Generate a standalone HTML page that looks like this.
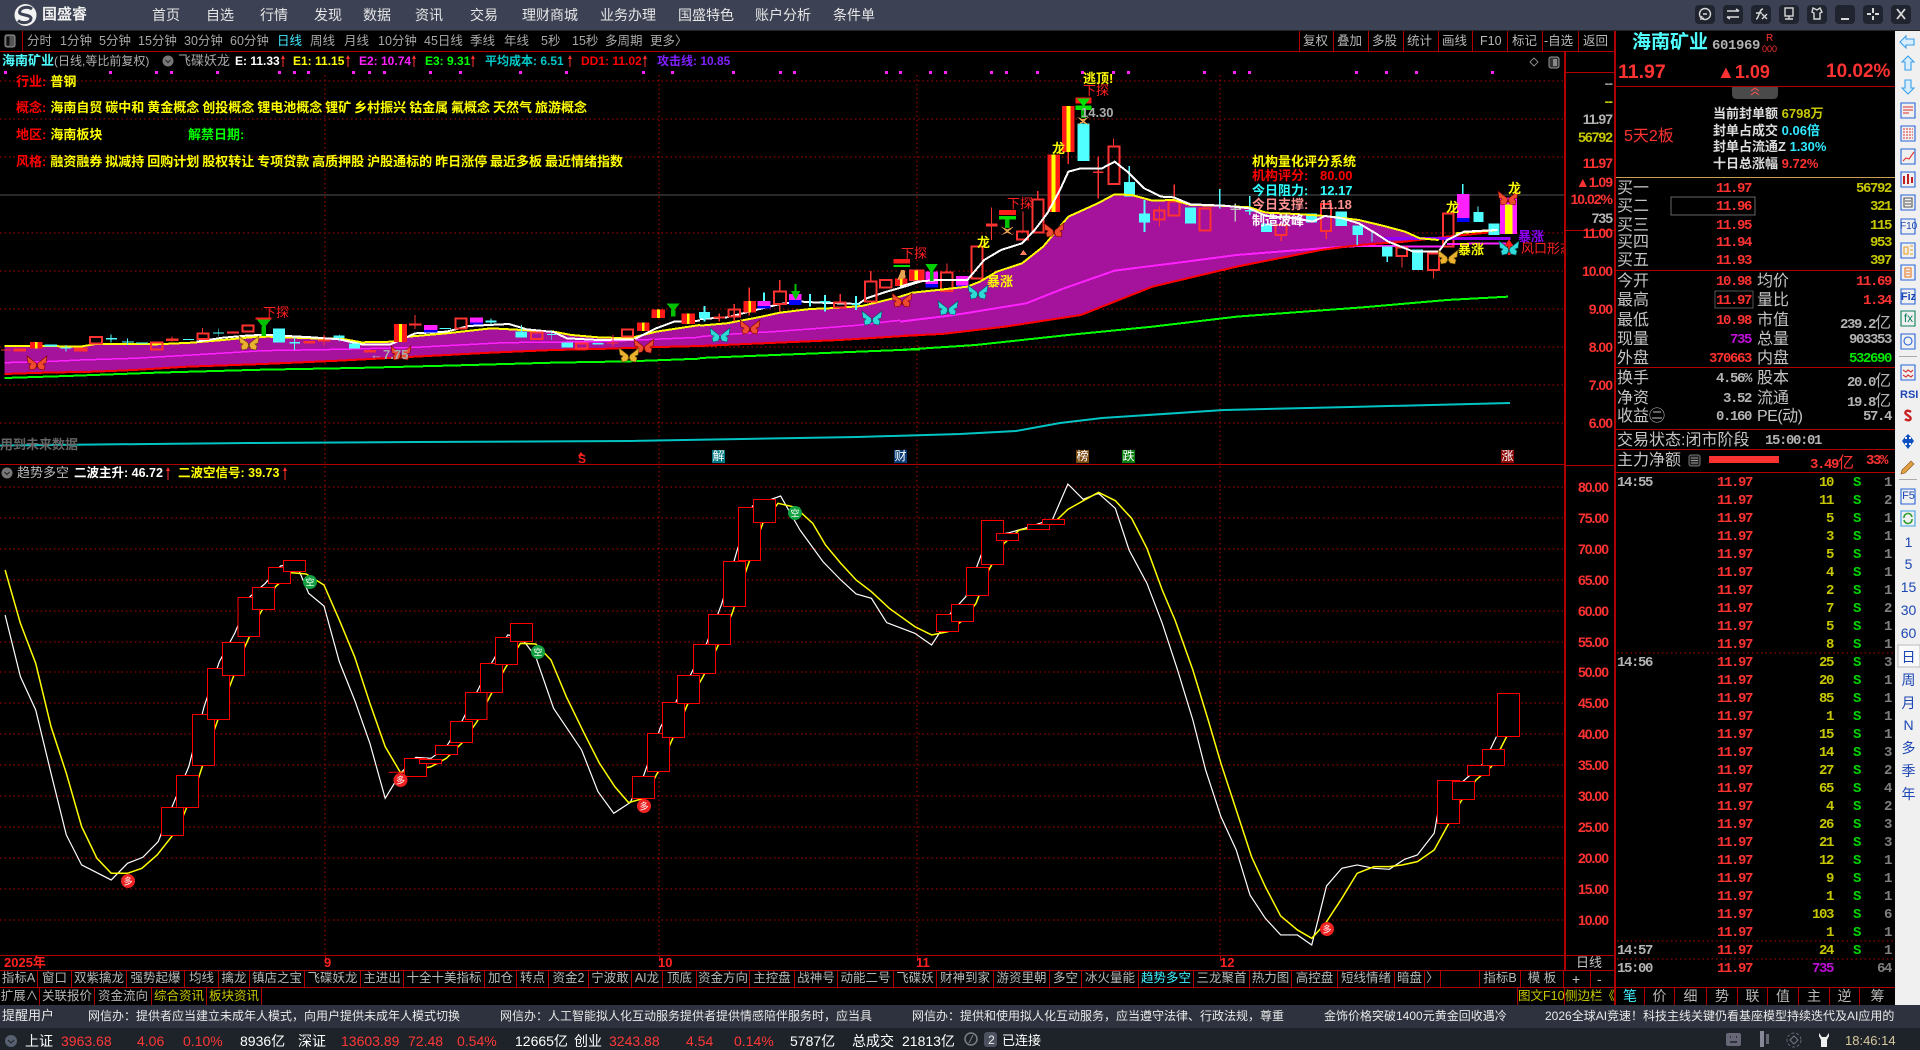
<!DOCTYPE html>
<html lang="zh"><head><meta charset="utf-8"><title>国盛睿</title>
<style>
html,body{margin:0;padding:0;background:#000;width:1920px;height:1050px;overflow:hidden}
body{position:relative;font-family:"Liberation Sans","WenQuanYi Zen Hei","Noto Sans CJK SC",sans-serif;font-size:12px;color:#bbb}
.a,.a2{position:absolute;white-space:nowrap;line-height:16px}
svg.n *{vector-effect:non-scaling-stroke}
.bar{position:absolute}
.m{position:absolute;top:6px;font-size:14px;color:#e6e6e6;line-height:18px;white-space:nowrap}
.p{position:absolute;top:33px;line-height:16px;color:#a8a8a8;font-size:12.5px;white-space:nowrap}
.tb{position:absolute;top:33px;line-height:16px;color:#b8b8b8;font-size:12.5px;white-space:nowrap}
.c{position:absolute;text-align:center;white-space:nowrap;overflow:hidden;font-size:12.5px;line-height:17px;height:17px;color:#b8b8b8;border-right:1px solid #b00000;box-sizing:border-box}
.b13{font-size:13px;font-weight:bold}
.g{margin-left:4px;word-spacing:-.65px}
.ax{position:absolute;width:50px;text-align:right;font-family:"Liberation Sans",sans-serif;font-weight:bold;font-size:14px;letter-spacing:-1px;line-height:16px;color:#ff3232}
.ix{left:1558px}.mx{left:1562px}
.l{position:absolute;left:1617px;font-size:16px;line-height:18px;color:#c4c4c4;white-space:nowrap}
.l2{left:1757px}
.v{position:absolute;font-family:"Liberation Mono",monospace;font-weight:bold;font-size:14px;letter-spacing:-1.4px;line-height:16px;text-align:right;white-space:nowrap;color:#ff3232}
.pr{left:1680px;width:71px}
.am{left:1800px;width:91px}
.t{position:absolute;left:0;height:16px;width:1895px;margin-top:1px;font-family:"Liberation Mono",monospace;font-weight:bold;font-size:14px;letter-spacing:-1.4px;line-height:16px}
.t span{position:absolute;display:block}
.t .k{left:1617px;color:#b4b4b4}
.t .q{left:1717px;color:#ff3232}
.t .o{left:1790px;width:43px;text-align:right;color:#c8c800}
.t .s{left:1853px;color:#00d800}
.t .u{left:1860px;width:31px;text-align:right;color:#808080}
.st{position:absolute;top:1033px;font-size:14px;line-height:16px;color:#fff;white-space:nowrap}
.rd{color:#ff3838}
.ic{position:absolute;left:1900px;width:17px;text-align:center;color:#1c46b4;font-size:14px;line-height:18px;font-family:"Liberation Sans",sans-serif}
</style></head><body>

<!-- title bar -->
<div class="bar" style="left:0;top:0;width:1920px;height:30px;background:#3c4254"></div>
<div class="bar" style="left:0;top:30px;width:1920px;height:1px;background:#222"></div>
<svg style="position:absolute;left:12px;top:2px" width="28" height="26" viewBox="0 0 28 26">
<circle cx="13.500" cy="13" r="11" fill="#f2f2f2"/><path d="M20 7C16 4 8 5 7.500 10 7.500 14 19 12 19 16.500 18.500 21 10 22 6 18.500" fill="none" stroke="#3c4254" stroke-width="3"/></svg>
<div class="a" style="left:42px;top:6px;font-size:15px;line-height:18px;color:#f0f0f0;font-weight:bold">国盛睿</div>
<div class="m" style="left:152px">首页</div><div class="m" style="left:206px">自选</div><div class="m" style="left:260px">行情</div><div class="m" style="left:314px">发现</div><div class="m" style="left:363px">数据</div><div class="m" style="left:415px">资讯</div><div class="m" style="left:470px">交易</div><div class="m" style="left:522px">理财商城</div><div class="m" style="left:600px">业务办理</div><div class="m" style="left:678px">国盛特色</div><div class="m" style="left:755px">账户分析</div><div class="m" style="left:833px">条件单</div>

<svg style="position:absolute;left:1690px;top:0" width="230" height="30" viewBox="1690 0 230 30">
<g fill="#20242f"><rect x="1695" y="5" width="20" height="19" rx="4"/><rect x="1723" y="5" width="20" height="19" rx="4"/><rect x="1751" y="5" width="20" height="19" rx="4"/><rect x="1779" y="5" width="20" height="19" rx="4"/><rect x="1807" y="5" width="20" height="19" rx="4"/><rect x="1835" y="5" width="20" height="19" rx="4"/><rect x="1863" y="5" width="20" height="19" rx="4"/><rect x="1891" y="5" width="20" height="19" rx="4"/></g>
<g fill="none" stroke="#d8d8d8" stroke-width="1.400">
<circle cx="1705" cy="14" r="5.500"/><path d="M1702 16l-1 3 3-1M1703 14h4"/>
<path d="M1727 11h12M1736 9l3 2M1739 17h-12M1730 19l-3-2"/>
<path d="M1756 19c3 0 3-10 7-10M1756 13h6M1762 14l5 5M1767 14l-5 5"/>
<rect x="1785" y="8" width="8" height="8"/><path d="M1785 19h8M1789 16v3"/>
<path d="M1813 8l4 2 3-2 2 4-2 1v6h-6v-6l-2-1z"/>
<path d="M1841 19h8" stroke-width="2"/>
<path d="M1873 8v5M1873 16v4M1867 14h4M1875 14h4" stroke-width="2"/>
<path d="M1897 9l8 10M1905 9l-8 10" stroke-width="1.800"/></g></svg>

<!-- period row -->
<div class="bar" style="left:22px;top:31px;width:1px;height:20px;background:#b00000"></div>
<svg style="position:absolute;left:3px;top:33px" width="14" height="16"><rect x="2" y="2" width="10" height="12" rx="2" fill="#555" stroke="#999"/><rect x="3.500" y="3.500" width="3" height="9" fill="#111"/></svg>
<div class="p" style="left:27px">分时</div><div class="p" style="left:60px">1分钟</div><div class="p" style="left:99px">5分钟</div><div class="p" style="left:138px">15分钟</div><div class="p" style="left:184px">30分钟</div><div class="p" style="left:230px">60分钟</div><div class="p" style="left:277px;color:#40e8ff">日线</div><div class="p" style="left:310px">周线</div><div class="p" style="left:344px">月线</div><div class="p" style="left:378px">10分钟</div><div class="p" style="left:424px">45日线</div><div class="p" style="left:470px">季线</div><div class="p" style="left:504px">年线</div><div class="p" style="left:541px">5秒</div><div class="p" style="left:572px">15秒</div><div class="p" style="left:605px">多周期</div><div class="p" style="left:650px">更多〉</div>
<div class="tb" style="left:1303px">复权</div><div class="tb" style="left:1337px">叠加</div><div class="tb" style="left:1372px">多股</div><div class="tb" style="left:1407px">统计</div><div class="tb" style="left:1442px">画线</div><div class="tb" style="left:1480px">F10</div><div class="tb" style="left:1512px">标记</div><div class="tb" style="left:1544px">-自选</div><div class="tb" style="left:1583px">返回</div>

<!-- base chart -->
<svg class="n" style="position:absolute;left:0;top:0" width="1920" height="1050" viewBox="0 0 1920 1050">
<g stroke="#b80000" stroke-width="1" fill="none" stroke-dasharray="1.500 3" shape-rendering="crispEdges">
<path d="M0 81H1564M0 119H1564M0 157H1564M0 233H1564M0 271H1564M0 309H1564M0 347H1564M0 385H1564M0 423H1564"/>
<path d="M0 487H1564M0 518H1564M0 549H1564M0 580H1564M0 611H1564M0 642H1564M0 672H1564M0 703H1564M0 734H1564M0 765H1564M0 796H1564M0 827H1564M0 858H1564M0 889H1564M0 920H1564"/>
<path d="M325 75V955M659 75V955M917 75V955M1220 75V955"/>
<path d="M1617 653H1893M1617 941H1893M1617 959H1893"/>
</g>
<path d="M0 195H1564" stroke="#555" shape-rendering="crispEdges"/>
<g fill="#ff20ff" shape-rendering="crispEdges"><rect x="4" y="71" width="3" height="3"/><rect x="109" y="71" width="3" height="3"/><rect x="155" y="71" width="3" height="3"/><rect x="170" y="71" width="3" height="3"/><rect x="216" y="71" width="3" height="3"/><rect x="278" y="71" width="3" height="3"/><rect x="293" y="71" width="3" height="3"/><rect x="307" y="71" width="3" height="3"/><rect x="352" y="71" width="3" height="3"/><rect x="368" y="71" width="3" height="3"/><rect x="383" y="71" width="3" height="3"/><rect x="429" y="71" width="3" height="3"/><rect x="459" y="71" width="3" height="3"/><rect x="519" y="71" width="3" height="3"/><rect x="565" y="71" width="3" height="3"/><rect x="642" y="71" width="3" height="3"/><rect x="671" y="71" width="3" height="3"/><rect x="732" y="71" width="3" height="3"/><rect x="779" y="71" width="3" height="3"/><rect x="793" y="71" width="3" height="3"/><rect x="885" y="71" width="3" height="3"/><rect x="899" y="71" width="3" height="3"/><rect x="929" y="71" width="3" height="3"/><rect x="944" y="71" width="3" height="3"/><rect x="990" y="71" width="3" height="3"/><rect x="1005" y="71" width="3" height="3"/><rect x="1036" y="71" width="3" height="3"/><rect x="1081" y="71" width="3" height="3"/><rect x="1112" y="71" width="3" height="3"/><rect x="1127" y="71" width="3" height="3"/><rect x="1203" y="71" width="3" height="3"/><rect x="1233" y="71" width="3" height="3"/><rect x="1248" y="71" width="3" height="3"/><rect x="1355" y="71" width="3" height="3"/><rect x="1385" y="71" width="3" height="3"/><rect x="1415" y="71" width="3" height="3"/><rect x="1491" y="71" width="3" height="3"/></g>

<!-- cyan long MA -->
<polyline points="0,445.500 96,444.500 248,443 415,442 630,441 857,437 960,434 1016,431 1060,423 1102,418 1224,410 1350,407 1510,403" fill="none" stroke="#00c4c4" stroke-width="2"/>

<!-- region left: zoom 7 coordinates -->
<g transform="translate(0,300) scale(.4464,.3333)" shape-rendering="crispEdges">
<polygon fill="#a5129b" points="10,138 100,138 180,140 215,132 300,132 350,133 430,128 500,120 560,112 600,110 700,115 760,115 810,127 880,125 915,110 1000,100 1100,85 1170,90 1240,95 1280,105 1340,112 1410,115 1470,95 1568,75 1568,138 1450,142 1340,147 1240,150 1100,158 930,170 760,182 590,192 420,200 300,210 215,215 100,218 10,222"/>
<g fill="none" stroke-width="1.500">
<polyline stroke="#ff20ff" points="10,188 100,185 180,180 300,175 430,165 590,152 760,148 930,142 1130,128 1340,125 1568,112"/>
<polyline stroke="#ff0000" stroke-width="2" points="10,222 100,218 215,215 300,210 420,200 590,192 760,182 930,170 1100,158 1240,150 1340,147 1450,142 1568,138"/>
<polyline stroke="#00ff00" stroke-width="2" points="10,234 150,228 350,218 590,209 795,204 1000,197 1240,188 1410,184 1568,176"/>
<polyline stroke="#ffff00" stroke-width="2" points="10,138 100,138 180,140 215,132 300,132 350,133 430,128 500,120 560,112 600,110 700,115 760,115 810,127 880,125 915,110 1000,100 1100,85 1170,90 1240,95 1280,105 1340,112 1410,115 1470,95 1568,75"/>
<polyline stroke="#ffffff" stroke-width="2" points="440,125 500,113 560,106 600,105 700,112 760,118 810,133 875,133 930,100 1000,95 1050,78 1140,72 1180,88 1240,96 1270,115 1340,120 1420,118 1470,85 1510,65 1568,62"/>
</g>
<!-- candles -->
<g fill="#ff3232"><rect x="30" y="145" width="28" height="10"/><rect x="372" y="115" width="28" height="8"/><rect x="508" y="94" width="27" height="7"/><rect x="2" y="148" width="23" height="4"/><rect x="680" y="123" width="26" height="8"/><rect x="712" y="119" width="28" height="5"/><rect x="815" y="150" width="27" height="8"/><rect x="916" y="70" width="28" height="6"/><rect x="1360" y="127" width="25" height="4"/><rect x="929" y="45" width="2" height="42"/><rect x="453" y="84" width="2" height="18"/><rect x="725" y="104" width="2" height="32"/><rect x="384" y="110" width="2" height="14"/><rect x="1372" y="105" width="2" height="35"/></g>
<g fill="#ff1a1a"><rect x="67" y="126" width="28" height="19"/><rect x="883" y="72" width="29" height="54"/><rect x="1460" y="28" width="30" height="26"/><rect x="1427" y="67" width="28" height="26"/><rect x="1527" y="40" width="30" height="32"/></g>
<g fill="#ffff00"><rect x="78" y="126" width="6" height="19"/><rect x="894" y="72" width="6" height="54"/><rect x="1472" y="28" width="6" height="26"/><rect x="1438" y="67" width="6" height="26"/><rect x="1539" y="40" width="6" height="32"/></g>
<g fill="none" stroke="#ff3232" stroke-width="2"><rect x="202" y="111" width="26" height="19"/><rect x="338" y="127" width="26" height="21"/><rect x="543" y="76" width="25" height="19"/><rect x="1020" y="55" width="25" height="30"/><rect x="1190" y="98" width="25" height="19"/><rect x="1393" y="88" width="25" height="22"/><rect x="1290" y="130" width="26" height="15"/><rect x="442" y="100" width="25" height="17"/><rect x="168" y="145" width="26" height="7"/></g>
<g fill="#50ffff"><rect x="612" y="85" width="26" height="42"/><rect x="782" y="130" width="24" height="15"/><rect x="1155" y="95" width="25" height="18"/><rect x="1258" y="127" width="26" height="16"/><rect x="100" y="133" width="28" height="6"/><rect x="237" y="114" width="25" height="4"/><rect x="273" y="124" width="27" height="4"/><rect x="305" y="127" width="27" height="4"/><rect x="135" y="142" width="25" height="4"/><rect x="477" y="97" width="25" height="4"/><rect x="410" y="117" width="25" height="3"/><rect x="648" y="126" width="24" height="4"/><rect x="747" y="106" width="25" height="8"/><rect x="985" y="84" width="25" height="3"/><rect x="1088" y="62" width="24" height="5"/><rect x="1225" y="102" width="20" height="3"/><rect x="1327" y="129" width="25" height="5"/><rect x="248" y="103" width="2" height="25"/><rect x="285" y="115" width="2" height="20"/><rect x="147" y="135" width="2" height="20"/><rect x="489" y="85" width="2" height="25"/><rect x="659" y="113" width="2" height="37"/><rect x="759" y="103" width="2" height="22"/><rect x="1099" y="55" width="2" height="18"/><rect x="1167" y="75" width="2" height="20"/><rect x="1235" y="90" width="2" height="30"/></g>
<g fill="#ff20ff"><rect x="950" y="75" width="30" height="15"/><rect x="1053" y="52" width="29" height="16"/></g>
<g fill="#0000ff"><rect x="950" y="90" width="30" height="8"/><rect x="1053" y="68" width="29" height="5"/></g>
<g fill="#00c000"><polygon points="575,58 607,58 591,85"/><rect x="586" y="80" width="10" height="28"/><polygon points="1493,10 1523,10 1508,35"/><rect x="1503" y="30" width="10" height="20"/></g>
<rect x="572" y="52" width="36" height="6" fill="#ff2020"/>
</g>

<!-- middle: zoom 11 coordinates -->
<g transform="translate(680,220) scale(.3333,.3333)" shape-rendering="crispEdges">
<polygon fill="#a5129b" points="60,318 140,310 230,293 300,278 390,267 470,264 545,258 600,245 640,235 720,215 720,345 480,360 60,378"/>
<g fill="none">
<polyline stroke="#ff20ff" stroke-width="1.500" points="60,350 160,342 280,335 390,327 530,316 640,303 720,295"/>
<polyline stroke="#ff0000" stroke-width="2" points="60,378 480,360 720,345"/>
<polyline stroke="#00ff00" stroke-width="2" points="60,414 660,390 720,388"/>
<polyline stroke="#ffff00" stroke-width="2" points="60,317 140,310 230,293 300,278 390,267 470,264 545,258 600,245 640,235 720,215"/>
<polyline stroke="#ffffff" stroke-width="2" points="60,297 140,292 180,282 235,268 300,252 365,245 420,248 535,252 560,235 620,215 680,198 720,185"/>
</g>
<g fill="#50ffff"><rect x="57" y="276" width="33" height="19"/><rect x="71" y="258" width="6" height="47"/><rect x="387" y="222" width="6" height="38"/><rect x="432" y="225" width="6" height="50"/><rect x="420" y="243" width="32" height="5"/><rect x="525" y="228" width="6" height="42"/><rect x="515" y="250" width="25" height="5"/><rect x="249" y="218" width="6" height="25"/></g>
<g fill="none" stroke="#ff3232" stroke-width="2"><rect x="145" y="268" width="35" height="22"/><rect x="282" y="214" width="36" height="38"/><rect x="555" y="184" width="35" height="61"/><rect x="600" y="180" width="35" height="22"/><rect x="462" y="248" width="35" height="15"/></g>
<g fill="#ff3232"><rect x="100" y="290" width="35" height="5"/><rect x="115" y="280" width="5" height="25"/><rect x="160" y="252" width="5" height="53"/><rect x="297" y="180" width="5" height="34"/><rect x="297" y="252" width="5" height="23"/><rect x="478" y="222" width="5" height="26"/><rect x="570" y="153" width="5" height="31"/><rect x="205" y="202" width="5" height="41"/><rect x="205" y="278" width="5" height="8"/></g>
<g fill="#ff1a1a"><rect x="190" y="243" width="38" height="35"/></g><rect x="205" y="243" width="8" height="35" fill="#ffff00"/>
<rect x="645" y="176" width="38" height="22" fill="#ff1a1a"/><rect x="660" y="176" width="8" height="22" fill="#ffff00"/>
<rect x="233" y="243" width="39" height="15" fill="#ff20ff"/><rect x="233" y="258" width="39" height="8" fill="#0000ff"/>
<rect x="327" y="222" width="38" height="18" fill="#ff20ff"/><rect x="327" y="240" width="38" height="15" fill="#0000ff"/>
<polygon points="333,213 361,213 347,240" fill="#00c000"/><rect x="344" y="192" width="6" height="22" fill="#00c000"/>
<rect x="640" y="117" width="50" height="14" fill="#ff1a1a"/><rect x="640" y="135" width="50" height="6" fill="#00e000"/>
<path d="M652 180l12-30 10 0 3 24z" fill="#e6a050"/>
</g>

<!-- right: zoom 6 coordinates -->
<g transform="translate(900,60) scale(.4209,.3333)" shape-rendering="crispEdges">
<polygon fill="#a5129b" points="0,710 30,698 90,690 160,680 190,665 230,635 290,610 340,560 400,470 470,430 510,403 550,405 600,422 650,420 690,435 760,437 830,442 870,458 940,462 1010,468 1090,480 1150,498 1200,515 1235,535 1235,542 1090,555 1000,570 800,620 600,680 430,765 250,800 100,822 0,828"/>
<g fill="none">
<polyline stroke="#ff20ff" stroke-width="2" points="0,785 130,765 300,730 390,685 510,632 680,605 800,585 1000,565 1090,558 1300,560"/>
<polyline stroke="#ff0000" stroke-width="2" points="0,828 100,822 250,800 430,765 600,680 800,620 1000,570 1090,555 1200,545 1300,530 1420,515"/>
<polyline stroke="#00ff00" stroke-width="2" points="0,870 180,855 400,825 600,800 800,770 1100,742 1300,720 1445,710"/>
</g>
<!-- candles under lines -->
<g fill="#50ffff"><rect x="422" y="190" width="28" height="113"/><rect x="532" y="366" width="26" height="44"/><rect x="568" y="460" width="26" height="27"/><rect x="677" y="443" width="26" height="47"/><rect x="858" y="490" width="26" height="26"/><rect x="965" y="460" width="26" height="28"/><rect x="1035" y="455" width="27" height="43"/><rect x="1075" y="497" width="25" height="28"/><rect x="1145" y="560" width="25" height="30"/><rect x="1216" y="568" width="27" height="62"/><rect x="1362" y="456" width="24" height="30"/><rect x="1398" y="490" width="26" height="35"/><rect x="543" y="318" width="3" height="48"/><rect x="579" y="420" width="4" height="96"/><rect x="1085" y="525" width="3" height="30"/><rect x="1156" y="590" width="3" height="16"/><rect x="758" y="387" width="4" height="58"/><rect x="829" y="408" width="4" height="57"/><rect x="1335" y="372" width="4" height="30"/><rect x="1372" y="440" width="3" height="16"/><rect x="1120" y="515" width="3" height="30"/><rect x="820" y="450" width="30" height="4"/></g>
<rect x="785" y="446" width="25" height="4" fill="#bbb"/><rect x="795" y="430" width="3" height="55" fill="#bbb"/>
<g fill="none" stroke="#ff3232" stroke-width="2"><rect x="278" y="515" width="26" height="23"/><rect x="315" y="418" width="26" height="100"/><rect x="495" y="260" width="26" height="112"/><rect x="604" y="452" width="24" height="26"/><rect x="638" y="425" width="26" height="42"/><rect x="712" y="445" width="26" height="67"/><rect x="892" y="495" width="26" height="30"/><rect x="1000" y="432" width="24" height="81"/><rect x="1180" y="563" width="24" height="25"/><rect x="1254" y="580" width="26" height="50"/><rect x="1290" y="460" width="25" height="100"/><rect x="170" y="560" width="26" height="95"/><rect x="97" y="637" width="28" height="56"/><rect x="24" y="632" width="32" height="28"/></g>
<g fill="#ff3232"><rect x="216" y="443" width="3" height="97"/><rect x="204" y="490" width="28" height="10"/><rect x="469" y="290" width="4" height="125"/><rect x="458" y="334" width="26" height="5"/><rect x="326" y="393" width="3" height="25"/><rect x="291" y="455" width="3" height="60"/><rect x="506" y="235" width="3" height="25"/><rect x="506" y="372" width="3" height="3"/><rect x="615" y="438" width="3" height="62"/><rect x="650" y="373" width="3" height="52"/><rect x="904" y="525" width="3" height="18"/><rect x="1011" y="513" width="3" height="24"/><rect x="1191" y="588" width="3" height="35"/><rect x="1266" y="630" width="3" height="25"/><rect x="110" y="610" width="3" height="27"/><rect x="398" y="276" width="4" height="36"/></g>
<rect x="350" y="283" width="30" height="173" fill="#ff1a1a"/><rect x="360" y="283" width="10" height="173" fill="#ffff00"/>
<rect x="385" y="138" width="30" height="138" fill="#ff1a1a"/><rect x="395" y="138" width="10" height="138" fill="#ffff00"/>
<rect x="24" y="632" width="32" height="28" fill="#ff1a1a"/><rect x="35" y="632" width="8" height="28" fill="#ffff00"/>
<rect x="60" y="635" width="30" height="37" fill="#ff20ff"/><rect x="60" y="672" width="30" height="11" fill="#0000ff"/>
<rect x="133" y="648" width="30" height="28" fill="#ff20ff"/><rect x="133" y="676" width="30" height="7" fill="#0000ff"/>
<rect x="1323" y="402" width="30" height="72" fill="#ff20ff"/><rect x="1323" y="474" width="30" height="12" fill="#0000ff"/>
<rect x="1426" y="412" width="40" height="110" fill="#ff20ff"/><rect x="1437" y="434" width="18" height="88" fill="#ffff00"/>
<g fill="none">
<polyline stroke="#9000ff" stroke-width="3" points="1150,535 1450,535"/>
<polyline stroke="#ff20ff" stroke-width="2" points="1300,552 1440,550"/>
<polyline stroke="#ffff00" stroke-width="2" points="0,710 30,698 90,690 160,680 190,665 230,635 290,610 340,560 400,470 470,430 510,403 550,405 600,422 650,420 690,435 760,437 830,442 870,458 940,462 1010,468 1090,480 1150,498 1200,515 1235,535 1280,540"/>
<polyline stroke="#ffff00" stroke-width="2" points="1320,520 1420,510"/>
<polyline stroke="#ffffff" stroke-width="2" points="0,680 40,665 90,660 160,660 200,600 240,570 290,550 320,510 350,460 380,390 400,335 430,325 480,325 510,305 540,335 580,385 620,410 650,412 690,433 770,437 830,445 870,468 940,475 980,485 1010,468 1050,475 1090,490 1130,520 1160,545 1220,575 1280,575 1300,540 1340,515 1420,510"/>
</g>
<!-- markers -->
<rect x="0" y="598" width="24" height="12" fill="#ff1a1a"/><rect x="0" y="615" width="24" height="6" fill="#00e000"/>
<polygon points="60,612 90,612 75,640" fill="#00d000"/><rect x="71" y="635" width="8" height="28" fill="#00c000"/>
<rect x="235" y="450" width="41" height="15" fill="#ff1a1a"/><rect x="235" y="468" width="41" height="10" fill="#00e000"/>
<rect x="250" y="478" width="10" height="26" fill="#00c000"/>
<rect x="417" y="112" width="38" height="18" fill="#ff1a1a"/><polygon points="420,115 452,115 436,140" fill="#00e000"/><rect x="417" y="136" width="38" height="14" fill="#00e000"/><rect x="430" y="150" width="12" height="24" fill="#00a800"/>
<path d="M420 170l15 8 15-8-12 14 12 12-15-8-15 8 12-12z" fill="#e6a050"/>
<path d="M240 500l15 8 15-8-12 14 12 12-15-8-15 8 12-12z" fill="#e6a050"/>
<polygon points="285,585 293,570 302,585" fill="#ff8060"/>
<rect x="1444" y="560" width="6" height="25" fill="#ff1a1a"/><polygon points="1435,560 1447,538 1459,560" fill="#ff1a1a"/>
</g>

<!-- indicator panel -->
<g transform="translate(0,480) scale(.5102,.3333)">
<g fill="none" stroke-width="1.200">
<polyline stroke="#ffffff" points="10,405 40,590 70,690 100,880 130,1065 160,1155 218,1200 250,1150 280,1132 310,1085 340,970 370,860 400,680 430,545 460,460 490,350 520,310 550,258 580,250 605,340 635,378 665,545 695,660 725,790 755,955 785,880 815,832 845,835 875,800 905,725 935,635 965,545 995,465 1020,470 1050,530 1085,685 1140,810 1172,935 1203,1000 1235,968 1262,885 1295,740 1325,665 1355,580 1385,490 1415,370 1445,210 1475,78 1530,48 1568,150"/>
<polyline stroke="#ffff00" stroke-width="1.500" points="10,270 40,430 70,550 100,740 130,880 160,1040 190,1135 218,1180 250,1180 278,1165 308,1125 338,1067 360,1005 390,890 420,750 450,620 480,500 510,400 540,320 570,278 600,282 635,315 665,420 695,530 725,670 755,800 785,878 815,870 845,860 875,835 905,790 935,725 960,650 990,565 1020,490 1050,492 1080,540 1110,650 1145,760 1175,850 1205,920 1232,968 1262,955 1290,875 1320,770 1350,665 1378,590 1405,505 1435,400 1465,260 1495,130 1525,70 1568,85"/>
</g>
<g fill="#000" stroke="#ff0000" stroke-width="1" shape-rendering="crispEdges">
<rect x="317" y="982" width="43" height="85"/><rect x="346" y="886" width="43" height="96"/><rect x="377" y="703" width="43" height="153"/><rect x="407" y="565" width="43" height="153"/><rect x="436" y="487" width="43" height="99"/><rect x="466" y="352" width="43" height="117"/><rect x="495" y="322" width="43" height="66"/><rect x="526" y="262" width="43" height="48"/><rect x="556" y="241" width="43" height="33"/>
<rect x="793" y="835" width="43" height="54"/><rect x="822" y="838" width="43" height="12"/><rect x="854" y="796" width="43" height="28"/><rect x="883" y="724" width="43" height="64"/><rect x="912" y="637" width="43" height="81"/><rect x="942" y="550" width="43" height="87"/><rect x="971" y="472" width="43" height="81"/><rect x="1001" y="430" width="43" height="54"/>
<rect x="1240" y="889" width="43" height="66"/><rect x="1269" y="760" width="43" height="114"/><rect x="1299" y="667" width="43" height="105"/><rect x="1328" y="586" width="43" height="84"/><rect x="1359" y="493" width="43" height="87"/><rect x="1389" y="403" width="43" height="90"/><rect x="1418" y="244" width="43" height="135"/><rect x="1447" y="82" width="44" height="159"/><rect x="1477" y="58" width="43" height="69"/>
</g>
<path d="M762 877H793" stroke="#ff0000" stroke-width="1"/>
</g>
<g transform="translate(800,480) scale(.5102,.3333)">
<g fill="none" stroke-width="1.200">
<polyline stroke="#ffffff" points="0,150 45,245 80,300 110,342 140,355 170,428 225,460 258,495 275,455 295,400 325,350 355,225 385,165 410,158 440,145 470,130 495,118 525,12 555,58 585,40 618,85 645,210 680,310 710,430 740,570 770,720 795,870 825,1010 855,1110 882,1245 912,1315 942,1365 975,1365 1003,1395 1032,1218 1062,1165 1092,1155 1125,1165 1155,1168 1185,1138 1210,1125 1243,1060 1250,1000 1280,930 1310,890 1340,850 1365,770"/>
<polyline stroke="#ffff00" stroke-width="1.500" points="0,95 25,130 50,195 80,250 110,300 140,335 175,385 225,440 258,465 290,455 320,420 345,370 370,270 400,190 430,150 470,140 500,125 525,88 585,37 618,62 650,115 680,205 710,330 735,420 770,570 800,720 825,850 855,990 885,1130 912,1220 942,1308 975,1350 1003,1375 1030,1330 1060,1260 1092,1180 1125,1160 1155,1160 1180,1155 1210,1145 1243,1110 1270,1035 1295,965 1325,900 1355,860 1385,770"/>
</g>
<g fill="#000" stroke="#ff0000" stroke-width="1" shape-rendering="crispEdges">
<rect x="268" y="403" width="43" height="51"/><rect x="297" y="373" width="43" height="51"/><rect x="326" y="262" width="43" height="84"/><rect x="356" y="121" width="43" height="132"/><rect x="385" y="160" width="43" height="21"/><rect x="446" y="133" width="43" height="15"/><rect x="475" y="118" width="43" height="15"/><rect x="1250" y="902" width="43" height="128"/><rect x="1279" y="904" width="43" height="54"/><rect x="1308" y="857" width="43" height="29"/><rect x="1338" y="808" width="43" height="48"/><rect x="1367" y="640" width="43" height="129"/>
</g></g>
<g font-size="9" text-anchor="middle" fill="#fff" font-family="'WenQuanYi Zen Hei','Noto Sans CJK SC',sans-serif">
<circle cx="128" cy="881" r="7" fill="#ee2222"/><text x="128" y="884.500">多</text>
<circle cx="400.500" cy="780" r="7" fill="#ee2222"/><text x="400.500" y="783.500">多</text>
<circle cx="644" cy="806" r="7" fill="#ee2222"/><text x="644" y="809.500">多</text>
<circle cx="1327" cy="929" r="7" fill="#ee2222"/><text x="1327" y="932.500">多</text>
<circle cx="310" cy="582" r="7" fill="#12a040"/><text x="310" y="585.500">空</text>
<circle cx="538" cy="652" r="7" fill="#12a040"/><text x="538" y="655.500">空</text>
<circle cx="795" cy="513" r="7" fill="#12a040"/><text x="795" y="516.500">空</text>
</g>

<!-- butterflies -->
<defs><path id="bf" d="M-1 0L-10-7-9 0-6 1-8 3-7 7-2 6 0 2 2 6 7 7 8 3 6 1 9 0 10-7 1 0 0 5z"/></defs>
<g stroke="#7a0000" stroke-width=".6" fill="#ee4a30">
<use href="#bf" x="37" y="363"/><use href="#bf" x="401" y="353"/><use href="#bf" x="644" y="346"/><use href="#bf" x="750" y="327"/><use href="#bf" x="902" y="300"/><use href="#bf" x="1054" y="230"/><use href="#bf" x="1508" y="198"/></g>
<g stroke="#6a5000" stroke-width=".6" fill="#eab030"><use href="#bf" x="249" y="343"/><use href="#bf" x="629" y="355"/><use href="#bf" x="1448" y="257"/></g>
<g stroke="#005a60" stroke-width=".6" fill="#30d8d8"><use href="#bf" x="720" y="335"/><use href="#bf" x="872" y="318"/><use href="#bf" x="948" y="308"/><use href="#bf" x="978" y="292"/><use href="#bf" x="1509" y="248"/></g>

<!-- red S arrow -->
<polygon points="581,452 578,456 584,456" fill="#ff2020"/>
<!-- frame lines -->
<g fill="#b00000" shape-rendering="crispEdges">
<rect x="0" y="51" width="1614" height="1"/>
<rect x="1564" y="52" width="2" height="918"/>
<rect x="1614" y="31" width="2" height="974"/>
<rect x="0" y="464" width="1564" height="1"/>
<rect x="0" y="955" width="1614" height="1"/>
<rect x="0" y="970" width="1614" height="1"/>
<rect x="0" y="987" width="1895" height="1"/>
<rect x="1566" y="72" width="48" height="1"/>
<rect x="1566" y="230" width="48" height="1"/>
<rect x="1564" y="465" width="50" height="1"/>
<rect x="1614" y="86" width="281" height="1"/>
<rect x="1616" y="270" width="279" height="1"/>
<rect x="1616" y="367" width="279" height="1"/>
<rect x="1616" y="429" width="279" height="1"/>
<rect x="1616" y="449" width="279" height="1"/>
<rect x="1616" y="472" width="279" height="1"/>
<rect x="1299" y="31" width="1" height="20"/><rect x="1333" y="31" width="1" height="20"/><rect x="1368" y="31" width="1" height="20"/><rect x="1403" y="31" width="1" height="20"/><rect x="1438" y="31" width="1" height="20"/><rect x="1472" y="31" width="1" height="20"/><rect x="1507" y="31" width="1" height="20"/><rect x="1542" y="31" width="1" height="20"/><rect x="1578" y="31" width="1" height="20"/>
<rect x="325" y="955" width="1" height="6"/><rect x="659" y="955" width="1" height="6"/><rect x="917" y="955" width="1" height="6"/><rect x="1220" y="955" width="1" height="6"/>
</g>
<rect x="1616" y="177" width="279" height="1" fill="#c8a050"/>
<!-- collapse tab -->
<path d="M1732 87H1778V94Q1778 99 1773 99H1737Q1732 99 1732 94Z" fill="#4a4a4a"/>
<path d="M1751 95l4-3 4 3M1751 91l4-3 4 3" stroke="#ff5050" fill="none"/>
<rect x="1671" y="197" width="84" height="18" fill="none" stroke="#666" shape-rendering="crispEdges"/>
<rect x="1715" y="291" width="38" height="17" fill="none" stroke="#555" shape-rendering="crispEdges"/>
<!-- diamond and switch -->
<path d="M1534 58l4 4-4 4-4-4z" fill="none" stroke="#888"/>
<rect x="1549" y="57" width="10" height="11" rx="2" fill="#333" stroke="#999"/><rect x="1553" y="59" width="4" height="7" fill="#888"/>
<!-- main-fund bar -->
<rect x="1709" y="456" width="70" height="7" fill="#ff3232"/>
<rect x="1689" y="455" width="11" height="11" rx="2" fill="#222" stroke="#777"/><path d="M1691 458h7M1691 460.500h7M1691 463h7" stroke="#999"/>
<!-- header circles -->
<circle cx="168" cy="61" r="5.500" fill="#777"/><path d="M165.500 60l2.500 2.500 2.500-2.500" stroke="#222" fill="none"/>
<circle cx="7" cy="473" r="5.500" fill="#777"/><path d="M4.500 472l2.500 2.500 2.500-2.500" stroke="#222" fill="none"/>
<!-- arrows after legends -->
<g stroke="#ff3030" fill="#ff3030"><path d="M283 56V67M348 56V67M414 56V67M473 56V67M570 56V67M645 56V67M168 468V480M285 468V480"/>
<path d="M283 55l-2 4h4zM348 55l-2 4h4zM414 55l-2 4h4zM473 55l-2 4h4zM570 55l-2 4h4zM645 55l-2 4h4zM168 467l-2 4h4zM285 467l-2 4h4z" stroke="none"/></g>
<!-- right toolbar -->
<rect x="1895" y="31" width="25" height="974" fill="#f0f0f0"/>
<rect x="1895" y="1005" width="25" height="23" fill="#2f3340"/>
<g fill="none" stroke="#2864d8" stroke-width="1.100">
<path d="M1900 42l6-6v3h8v6h-8v3z" stroke="#3aa0e8" fill="#d8eeff"/>
<path d="M1908 56l6 6h-3v8h-6v-8h-3z" stroke="#3aa0e8" fill="#d8eeff"/>
<path d="M1908 94l6-6h-3v-8h-6v8h-3z" stroke="#3aa0e8" fill="#d8eeff"/>
<rect x="1901" y="103" width="14" height="15"/><path d="M1903 107h10M1903 110h10M1903 113h6" stroke="#e03030"/>
<rect x="1901" y="126" width="14" height="15"/><path d="M1903 129h10M1903 132h10M1903 135h10M1903 138h10" stroke="#e03030" stroke-dasharray="2 1"/>
<rect x="1901" y="149" width="14" height="15"/><path d="M1903 161l3-3 3 1 5-7" stroke="#e03030"/>
<rect x="1901" y="172" width="14" height="15"/><path d="M1904 176v8M1908 174v10M1912 177v6" stroke="#c02020" stroke-width="2"/>
<rect x="1901" y="195" width="14" height="15"/><rect x="1904" y="198" width="8" height="9" stroke="#555"/><path d="M1905 201h6M1905 204h6" stroke="#555"/>
<rect x="1901" y="219" width="14" height="15"/>
<rect x="1901" y="243" width="14" height="15"/><path d="M1904 247h4v7h-4zM1910 246h3M1910 250h3M1910 254h3" stroke="#e8a020"/>
<rect x="1901" y="265" width="14" height="15"/><rect x="1905" y="268" width="6" height="9" stroke="#e87820"/><path d="M1906 271h4M1906 274h4" stroke="#e87820"/>
<rect x="1901" y="289" width="14" height="15"/>
<rect x="1901" y="311" width="14" height="15" stroke="#108060"/>
<rect x="1901" y="334" width="14" height="15"/><circle cx="1908" cy="341" r="4"/>
<rect x="1901" y="365" width="14" height="15"/><path d="M1903 370l3 2 2-2 3 2 2-2M1903 375l3 2 2-2 3 2 2-2" stroke="#d03030"/>
<rect x="1901" y="489" width="14" height="15"/>
<rect x="1901" y="511" width="14" height="15" stroke="#3aa0e8"/><path d="M1904 518a4 4 0 018-1M1912 519a4 4 0 01-8 1" stroke="#30a030" stroke-width="1.600"/>
</g>
<path d="M1908 434l3 3h-2v2h2v-2l3 4-3 4v-2h-2v2h2l-3 4-3-4h2v-2h-2v2l-3-4 3-4v2h2v-2h-2z" fill="#0d4ec0"/>
<path d="M1902 470l9-9 3 3-9 9-4 1z" fill="#e0a040" stroke="#805020" stroke-width=".6"/>
<path d="M1911 412c-4-3-7 0-5 2l4 3c2 2-1 5-5 2" fill="none" stroke="#c82020" stroke-width="2.400"/>
<rect x="1899" y="356" width="18" height="1" fill="#aaa"/><rect x="1899" y="479" width="18" height="1" fill="#aaa"/>
<rect x="1898" y="645" width="22" height="22" fill="#fafafa" stroke="#bbb"/>
</svg>

<!-- right toolbar text -->
<div class="ic" style="top:288px;font-size:11px;font-weight:bold">Fiz</div>
<div class="ic" style="top:309px;font-size:12px;color:#108060">fx</div>
<div class="ic" style="top:386px;font-size:11px;font-weight:bold">RSI</div>
<div class="ic" style="top:487px;font-size:11px">F5</div>
<div class="ic" style="top:533px">1</div><div class="ic" style="top:555px">5</div><div class="ic" style="top:578px">15</div><div class="ic" style="top:601px">30</div><div class="ic" style="top:624px">60</div><div class="ic" style="top:648px">日</div><div class="ic" style="top:671px">周</div><div class="ic" style="top:694px">月</div><div class="ic" style="top:716px">N</div><div class="ic" style="top:739px">多</div><div class="ic" style="top:762px">季</div><div class="ic" style="top:785px">年</div>
<div class="ic" style="top:218px;font-size:10px">F10</div>

<!-- legend main -->
<div class="a b13" style="left:2px;top:53px;color:#50ffff">海南矿业<span style="color:#b0b0b0;font-weight:normal;font-size:12px">(日线,等比前复权)</span></div>
<div class="a" style="left:178px;top:53px;color:#a8a8a8;font-size:13px">飞碟妖龙</div>
<div class="a b13" style="left:235px;top:53px;color:#fff;font-size:12px">E: 11.33</div>
<div class="a b13" style="left:293px;top:53px;color:#ff0;font-size:12px">E1: 11.15</div>
<div class="a b13" style="left:359px;top:53px;color:#ff20ff;font-size:12px">E2: 10.74</div>
<div class="a b13" style="left:425px;top:53px;color:#00ff00;font-size:12px">E3: 9.31</div>
<div class="a b13" style="left:485px;top:53px;color:#00c8c8;font-size:12px">平均成本: 6.51</div>
<div class="a b13" style="left:581px;top:53px;color:#ff0000;font-size:12px">DD1: 11.02</div>
<div class="a b13" style="left:657px;top:53px;color:#8020ff;font-size:12px">攻击线: 10.85</div>

<div class="a b13" style="left:16px;top:74px;color:#f00">行业:<span class="g" style="color:#ff0">普钢</span></div>
<div class="a b13" style="left:16px;top:100px;color:#f00">概念:<span class="g" style="color:#ff0">海南自贸 碳中和 黄金概念 创投概念 锂电池概念 锂矿 乡村振兴 钴金属 氟概念 天然气 旅游概念</span></div>
<div class="a b13" style="left:16px;top:127px;color:#f00">地区:<span class="g" style="color:#ff0">海南板块</span></div>
<div class="a b13" style="left:188px;top:127px;color:#0f0">解禁日期:</div>
<div class="a b13" style="left:16px;top:154px;color:#f00">风格:<span class="g" style="color:#ff0">融资融券 拟减持 回购计划 股权转让 专项贷款 高质押股 沪股通标的 昨日涨停 最近多板 最近情绪指数</span></div>

<!-- chart tags -->
<div class="a b13" style="left:0;top:437px;color:#666">用到未来数据</div>
<div class="a" style="left:263px;top:305px;color:#ff2020;font-size:13px">下探</div>
<div class="a" style="left:370px;top:347px;color:#aaa;font-size:13px;font-weight:bold">←7.75</div>
<div class="a" style="left:901px;top:246px;color:#ff2020;font-size:13px">下探</div>
<div class="a" style="left:1007px;top:196px;color:#ff2020;font-size:13px">下探</div>
<div class="a" style="left:1083px;top:83px;color:#ff2020;font-size:13px">下探</div>
<div class="a b13" style="left:1083px;top:71px;color:#ff0">逃顶!</div>
<div class="a" style="left:1081px;top:105px;color:#aaa;font-weight:bold;font-size:13px">14.30</div>
<div class="a b13" style="left:977px;top:235px;color:#ff0">龙</div>
<div class="a b13" style="left:1052px;top:141px;color:#ff0">龙</div>
<div class="a b13" style="left:1446px;top:200px;color:#ff0">龙</div>
<div class="a b13" style="left:1508px;top:181px;color:#ff0">龙</div>
<div class="a b13" style="left:987px;top:274px;color:#ff0">暴涨</div>
<div class="a b13" style="left:1458px;top:242px;color:#ff0">暴涨</div>
<div class="a b13" style="left:1518px;top:229px;color:#9000ff">暴涨</div>
<div class="a" style="left:1521px;top:241px;color:#ff2020;font-size:13px;width:43px;overflow:hidden">风口形态</div>

<div class="a b13" style="left:1252px;top:154px;color:#ff0">机构量化评分系统</div>
<div class="a b13" style="left:1252px;top:168px;color:#f00">机构评分:</div><div class="a b13" style="left:1320px;top:168px;color:#f00">80.00</div>
<div class="a b13" style="left:1252px;top:183px;color:#30ffff">今日阻力:</div><div class="a b13" style="left:1320px;top:183px;color:#30ffff">12.17</div>
<div class="a b13" style="left:1252px;top:197px;color:#ff9090">今日支撑:</div><div class="a b13" style="left:1320px;top:197px;color:#ff9090">11.18</div>
<div class="a b13" style="left:1252px;top:213px;color:#fff">制造波峰</div>

<div class="a" style="left:578px;top:451px;color:#ff2020;font-weight:bold;font-size:12px">S</div>
<div class="a" style="left:712px;top:450px;width:13px;height:13px;line-height:13px;background:#007a80;color:#fff;font-size:12px;text-align:center">解</div>
<div class="a" style="left:894px;top:450px;width:13px;height:13px;line-height:13px;background:#0a3a78;color:#fff;font-size:12px;text-align:center">财</div>
<div class="a" style="left:1076px;top:450px;width:13px;height:13px;line-height:13px;background:#7a4a10;color:#fff;font-size:12px;text-align:center">榜</div>
<div class="a" style="left:1122px;top:450px;width:13px;height:13px;line-height:13px;background:#0a8010;color:#fff;font-size:12px;text-align:center">跌</div>
<div class="a" style="left:1501px;top:450px;width:13px;height:13px;line-height:13px;background:#8a0808;color:#fff;font-size:12px;text-align:center">涨</div>

<!-- indicator legend -->
<div class="a" style="left:17px;top:465px;color:#bbb;font-size:13px">趋势多空</div>
<div class="a b13" style="left:74px;top:465px;color:#fff;font-size:12.5px">二波主升: 46.72</div>
<div class="a b13" style="left:178px;top:465px;color:#ff0;font-size:12.5px">二波空信号: 39.73</div>

<!-- main axis -->
<div class="ax mx" style="top:75px;color:#999">--</div>
<div class="ax mx" style="top:93px;color:#c8c800">--</div>
<div class="ax mx" style="top:111px;color:#b4b4b4">11.97</div>
<div class="ax mx" style="top:129px;color:#c8c800">56792</div>
<div class="ax mx" style="top:155px">11.97</div>
<div class="ax mx" style="top:174px">▲1.09</div>
<div class="ax mx" style="top:191px">10.02%</div>
<div class="ax mx" style="top:210px;color:#b4b4b4">735</div>
<div class="ax mx" style="top:225px">11.00</div>
<div class="ax mx" style="top:263px">10.00</div>
<div class="ax mx" style="top:301px">9.00</div>
<div class="ax mx" style="top:339px">8.00</div>
<div class="ax mx" style="top:377px">7.00</div>
<div class="ax mx" style="top:415px">6.00</div>
<!-- indicator axis -->
<div class="ax ix" style="top:479px">80.00</div><div class="ax ix" style="top:510px">75.00</div><div class="ax ix" style="top:541px">70.00</div><div class="ax ix" style="top:572px">65.00</div><div class="ax ix" style="top:603px">60.00</div><div class="ax ix" style="top:634px">55.00</div><div class="ax ix" style="top:664px">50.00</div><div class="ax ix" style="top:695px">45.00</div><div class="ax ix" style="top:726px">40.00</div><div class="ax ix" style="top:757px">35.00</div><div class="ax ix" style="top:788px">30.00</div><div class="ax ix" style="top:819px">25.00</div><div class="ax ix" style="top:850px">20.00</div><div class="ax ix" style="top:881px">15.00</div><div class="ax ix" style="top:912px">10.00</div>

<!-- time axis -->
<div class="a b13" style="left:4px;top:955px;color:#ff2020">2025年</div>
<div class="a b13" style="left:324px;top:955px;color:#ff2020">9</div>
<div class="a b13" style="left:658px;top:955px;color:#ff2020">10</div>
<div class="a b13" style="left:916px;top:955px;color:#ff2020">11</div>
<div class="a b13" style="left:1220px;top:955px;color:#ff2020">12</div>
<div class="a" style="left:1576px;top:955px;font-size:13px;color:#c4c4c4">日线</div>
<div class="a" style="left:1572px;top:971px;font-size:14px;color:#c4c4c4">+</div>
<div class="a" style="left:1597px;top:971px;font-size:14px;color:#c4c4c4">-</div>
<div class="bar" style="left:1590px;top:971px;width:1px;height:16px;background:#b00000"></div>

<!-- indicator tabs -->
<div class="c" style="left:0;top:970px;width:38px">指标A</div><div class="c" style="left:38px;top:970px;width:34px">窗口</div><div class="c" style="left:72px;top:970px;width:55px">双紫擒龙</div><div class="c" style="left:127px;top:970px;width:58px">强势起爆</div><div class="c" style="left:185px;top:970px;width:34px">均线</div><div class="c" style="left:219px;top:970px;width:31px">擒龙</div><div class="c" style="left:250px;top:970px;width:55px">镇店之宝</div><div class="c" style="left:305px;top:970px;width:56px">飞碟妖龙</div><div class="c" style="left:361px;top:970px;width:43px">主进出</div><div class="c" style="left:404px;top:970px;width:81px">十全十美指标</div><div class="c" style="left:485px;top:970px;width:32px">加仓</div><div class="c" style="left:517px;top:970px;width:32px">转点</div><div class="c" style="left:549px;top:970px;width:40px">资金2</div><div class="c" style="left:589px;top:970px;width:43px">宁波敢</div><div class="c" style="left:632px;top:970px;width:31px">AI龙</div><div class="c" style="left:663px;top:970px;width:34px">顶底</div><div class="c" style="left:697px;top:970px;width:53px">资金方向</div><div class="c" style="left:750px;top:970px;width:45px">主控盘</div><div class="c" style="left:795px;top:970px;width:43px">战神号</div><div class="c" style="left:838px;top:970px;width:56px">动能二号</div><div class="c" style="left:894px;top:970px;width:43px">飞碟妖</div><div class="c" style="left:937px;top:970px;width:57px">财神到家</div><div class="c" style="left:994px;top:970px;width:56px">游资里朝</div><div class="c" style="left:1050px;top:970px;width:32px">多空</div><div class="c" style="left:1082px;top:970px;width:57px">冰火量能</div><div class="c" style="left:1139px;top:970px;width:55px;color:#40f0ff">趋势多空</div><div class="c" style="left:1194px;top:970px;width:56px">三龙聚首</div><div class="c" style="left:1250px;top:970px;width:42px">热力图</div><div class="c" style="left:1292px;top:970px;width:46px">高控盘</div><div class="c" style="left:1338px;top:970px;width:57px">短线情绪</div><div class="c" style="left:1395px;top:970px;width:30px">暗盘</div><div class="c" style="left:1425px;top:970px;width:16px">〉</div><div class="c" style="left:1441px;top:970px;width:39px"></div><div class="c" style="left:1480px;top:970px;width:41px">指标B</div><div class="c" style="left:1521px;top:970px;width:43px">模 板</div>
<!-- bottom tabs -->
<div class="c" style="left:0;top:988px;width:40px">扩展∧</div><div class="c" style="left:40px;top:988px;width:55px">关联报价</div><div class="c" style="left:95px;top:988px;width:57px">资金流向</div><div class="c" style="left:152px;top:988px;width:55px;color:#c8c800">综合资讯</div><div class="c" style="left:207px;top:988px;width:55px;color:#c8c800">板块资讯</div>
<div class="c" style="left:1517px;top:988px;width:48px;color:#c8c800;border-left:1px solid #b00000">图文F10</div><div class="c" style="left:1565px;top:988px;width:49px;color:#c8c800;border-right:none">侧边栏《</div>
<div class="c" style="left:1616px;top:988px;width:29px;color:#40f0ff;font-size:14px">笔</div><div class="c" style="left:1645px;top:988px;width:30px;font-size:14px">价</div><div class="c" style="left:1675px;top:988px;width:32px;font-size:14px">细</div><div class="c" style="left:1707px;top:988px;width:31px;font-size:14px">势</div><div class="c" style="left:1738px;top:988px;width:30px;font-size:14px">联</div><div class="c" style="left:1768px;top:988px;width:31px;font-size:14px">值</div><div class="c" style="left:1799px;top:988px;width:31px;font-size:14px">主</div><div class="c" style="left:1830px;top:988px;width:30px;font-size:14px">逆</div><div class="c" style="left:1860px;top:988px;width:35px;font-size:14px;border:none">筹</div>

<!-- news row -->
<div class="bar" style="left:0;top:1005px;width:1920px;height:23px;background:#2e323e"></div>
<div class="a" style="left:2px;top:1008px;color:#e8e8e8;font-size:13px">提醒用户</div>
<div class="a" style="left:88px;top:1008px;color:#e8e8e8">网信办：提供者应当建立未成年人模式，向用户提供未成年人模式切换</div>
<div class="a" style="left:500px;top:1008px;color:#e8e8e8">网信办：人工智能拟人化互动服务提供者提供情感陪伴服务时，应当具</div>
<div class="a" style="left:912px;top:1008px;color:#e8e8e8">网信办：提供和使用拟人化互动服务，应当遵守法律、行政法规，尊重</div>
<div class="a" style="left:1324px;top:1008px;color:#e8e8e8">金饰价格突破1400元黄金回收遇冷</div>
<div class="a" style="left:1545px;top:1008px;color:#e8e8e8">2026全球AI竞速！科技主线关键仍看基座模型持续迭代及AI应用的</div>

<!-- status bar -->
<div class="bar" style="left:0;top:1028px;width:1920px;height:22px;background:#1d2328"></div>
<svg style="position:absolute;left:0;top:1028px" width="1920" height="22" viewBox="0 1028 1920 22">
<circle cx="11" cy="1041" r="6" fill="#566070"/><path d="M8 1040l3 3 3-3" stroke="#1d2328" fill="none"/>
<circle cx="971" cy="1039" r="6" fill="none" stroke="#7a8088" stroke-width="1.500"/><path d="M969 1043l4-8" stroke="#7a8088"/>
<rect x="984" y="1032" width="13" height="15" rx="3" fill="#4c5260"/>
<rect x="1726" y="1033" width="15" height="13" rx="2" fill="#667"/><path d="M1730 1037h1M1736 1037h1M1730 1042h7" stroke="#1d2328" stroke-width="1.500"/>
<rect x="1760" y="1031" width="4" height="16" fill="#889"/><rect x="1766" y="1034" width="3" height="10" fill="#667"/>
<circle cx="1794" cy="1040" r="7" fill="none" stroke="#667" stroke-dasharray="3 2"/><path d="M1790 1040l4-4 4 4-4 4z" fill="none" stroke="#778"/>
<path d="M1819 1033l3 4h4l3-4v3l-2 4v7h-6v-7l-2-4z" fill="#eee"/>
</svg>
<div class="a" style="left:988px;top:1032px;color:#eee;font-size:12px;width:7px;text-align:center">2</div>
<div class="st" style="left:25px">上证</div><div class="st rd" style="left:61px">3963.68</div><div class="st rd" style="left:137px">4.06</div><div class="st rd" style="left:183px">0.10%</div><div class="st" style="left:240px">8936亿</div>
<div class="st" style="left:298px">深证</div><div class="st rd" style="left:341px">13603.89</div><div class="st rd" style="left:408px">72.48</div><div class="st rd" style="left:457px">0.54%</div><div class="st" style="left:515px">12665亿</div>
<div class="st" style="left:574px">创业</div><div class="st rd" style="left:609px">3243.88</div><div class="st rd" style="left:686px">4.54</div><div class="st rd" style="left:734px">0.14%</div><div class="st" style="left:790px">5787亿</div>
<div class="st" style="left:852px">总成交</div><div class="st" style="left:902px">21813亿</div>
<div class="st" style="left:1002px;font-size:13px">已连接</div>
<div class="st" style="left:1845px;font-size:13px;color:#d8c8a0">18:46:14</div>

<!-- quote header -->
<div class="a" style="left:1632px;top:33px;font-size:19px;line-height:20px;color:#50ffff;font-weight:bold">海南矿业</div>
<div class="a" style="left:1712px;top:38px;font-size:14px;color:#b0b0b0;font-family:'Liberation Mono',monospace;letter-spacing:-.4px;font-weight:bold">601969</div>
<div class="a" style="left:1766px;top:33px;font-size:10px;line-height:11px;color:#ff3232">R</div>
<div class="a" style="left:1762px;top:44px;font-size:9px;line-height:10px;color:#ff3232">000</div>
<div class="a" style="left:1618px;top:62px;font-size:19.500px;line-height:20px;font-weight:bold;color:#ff3232">11.97</div>
<div class="a" style="left:1717px;top:62px;font-size:18px;line-height:20px;font-weight:bold;color:#ff3232">▲1.09</div>
<div class="a" style="left:1826px;top:62px;font-size:19px;line-height:20px;font-weight:bold;color:#ff3232">10.02%</div>
<div class="a" style="left:1624px;top:128px;font-size:16px;line-height:18px;color:#ff3232">5天2板</div>
<div class="a" style="left:1713px;top:106px;font-size:13px;color:#ddd;font-weight:bold">当前封单额 <span style="color:#c8c800">6798万</span></div>
<div class="a" style="left:1713px;top:123px;font-size:13px;color:#ddd;font-weight:bold">封单占成交 <span style="color:#30e8ff">0.06倍</span></div>
<div class="a" style="left:1713px;top:139px;font-size:13px;color:#ddd;font-weight:bold">封单占流通Z <span style="color:#30e8ff">1.30%</span></div>
<div class="a" style="left:1713px;top:156px;font-size:13px;color:#ddd;font-weight:bold">十日总涨幅 <span style="color:#ff3232">9.72%</span></div>

<!-- five levels -->
<div class="l" style="top:180px">买一</div><div class="l" style="top:198px">买二</div><div class="l" style="top:217px">买三</div><div class="l" style="top:234px">买四</div><div class="l" style="top:252px">买五</div>
<div class="v pr" style="top:181px">11.97</div><div class="v pr" style="top:199px">11.96</div><div class="v pr" style="top:218px">11.95</div><div class="v pr" style="top:235px">11.94</div><div class="v pr" style="top:253px">11.93</div>
<div class="v am" style="top:181px;color:#c8c800">56792</div><div class="v am" style="top:199px;color:#c8c800">321</div><div class="v am" style="top:218px;color:#c8c800">115</div><div class="v am" style="top:235px;color:#c8c800">953</div><div class="v am" style="top:253px;color:#c8c800">397</div>

<div class="l" style="top:273px">今开</div><div class="l l2" style="top:273px">均价</div><div class="v pr" style="top:274px">10.98</div><div class="v am" style="top:274px">11.69</div>
<div class="l" style="top:292px">最高</div><div class="l l2" style="top:292px">量比</div><div class="v pr" style="top:293px">11.97</div><div class="v am" style="top:293px">1.34</div>
<div class="l" style="top:312px">最低</div><div class="l l2" style="top:312px">市值</div><div class="v pr" style="top:313px">10.98</div><div class="v am" style="top:313px;color:#b4b4b4">239.2<span style="font-family:'WenQuanYi Zen Hei','Noto Sans CJK SC',sans-serif;font-size:16px;letter-spacing:0;font-weight:normal">亿</span></div>
<div class="l" style="top:331px">现量</div><div class="l l2" style="top:331px">总量</div><div class="v pr" style="top:332px;color:#c010d8">735</div><div class="v am" style="top:332px;color:#b4b4b4">903353</div>
<div class="l" style="top:350px">外盘</div><div class="l l2" style="top:350px">内盘</div><div class="v pr" style="top:351px">370663</div><div class="v am" style="top:351px;color:#00e800">532690</div>

<div class="l" style="top:370px">换手</div><div class="l l2" style="top:370px">股本</div><div class="v pr" style="top:371px;color:#b4b4b4">4.56%</div><div class="v am" style="top:371px;color:#b4b4b4">20.0<span style="font-family:'WenQuanYi Zen Hei','Noto Sans CJK SC',sans-serif;font-size:16px;letter-spacing:0;font-weight:normal">亿</span></div>
<div class="l" style="top:390px">净资</div><div class="l l2" style="top:390px">流通</div><div class="v pr" style="top:391px;color:#b4b4b4">3.52</div><div class="v am" style="top:391px;color:#b4b4b4">19.8<span style="font-family:'WenQuanYi Zen Hei','Noto Sans CJK SC',sans-serif;font-size:16px;letter-spacing:0;font-weight:normal">亿</span></div>
<div class="l" style="top:408px">收益㊁</div><div class="l l2" style="top:408px;letter-spacing:-.5px">PE(动)</div><div class="v pr" style="top:409px;color:#b4b4b4">0.160</div><div class="v am" style="top:409px;color:#b4b4b4">57.4</div>

<div class="l" style="top:432px">交易状态:闭市阶段</div><div class="v" style="left:1765px;top:433px;color:#b4b4b4">15:00:01</div>
<div class="l" style="top:452px">主力净额</div><div class="v" style="left:1810px;top:453px">3.49<span style="font-family:'WenQuanYi Zen Hei','Noto Sans CJK SC',sans-serif;font-size:16px;letter-spacing:0;font-weight:normal">亿</span></div><div class="v" style="left:1866px;top:453px">33%</div>

<!-- ticks -->
<div class="t" style="top:474px"><span class="k">14:55</span><span class="q">11.97</span><span class="o">10</span><span class="s">S</span><span class="u">1</span></div>
<div class="t" style="top:492px"><span class="q">11.97</span><span class="o">11</span><span class="s">S</span><span class="u">2</span></div>
<div class="t" style="top:510px"><span class="q">11.97</span><span class="o">5</span><span class="s">S</span><span class="u">1</span></div>
<div class="t" style="top:528px"><span class="q">11.97</span><span class="o">3</span><span class="s">S</span><span class="u">1</span></div>
<div class="t" style="top:546px"><span class="q">11.97</span><span class="o">5</span><span class="s">S</span><span class="u">1</span></div>
<div class="t" style="top:564px"><span class="q">11.97</span><span class="o">4</span><span class="s">S</span><span class="u">1</span></div>
<div class="t" style="top:582px"><span class="q">11.97</span><span class="o">2</span><span class="s">S</span><span class="u">1</span></div>
<div class="t" style="top:600px"><span class="q">11.97</span><span class="o">7</span><span class="s">S</span><span class="u">2</span></div>
<div class="t" style="top:618px"><span class="q">11.97</span><span class="o">5</span><span class="s">S</span><span class="u">1</span></div>
<div class="t" style="top:636px"><span class="q">11.97</span><span class="o">8</span><span class="s">S</span><span class="u">1</span></div>
<div class="t" style="top:654px"><span class="k">14:56</span><span class="q">11.97</span><span class="o">25</span><span class="s">S</span><span class="u">3</span></div>
<div class="t" style="top:672px"><span class="q">11.97</span><span class="o">20</span><span class="s">S</span><span class="u">1</span></div>
<div class="t" style="top:690px"><span class="q">11.97</span><span class="o">85</span><span class="s">S</span><span class="u">1</span></div>
<div class="t" style="top:708px"><span class="q">11.97</span><span class="o">1</span><span class="s">S</span><span class="u">1</span></div>
<div class="t" style="top:726px"><span class="q">11.97</span><span class="o">15</span><span class="s">S</span><span class="u">1</span></div>
<div class="t" style="top:744px"><span class="q">11.97</span><span class="o">14</span><span class="s">S</span><span class="u">3</span></div>
<div class="t" style="top:762px"><span class="q">11.97</span><span class="o">27</span><span class="s">S</span><span class="u">2</span></div>
<div class="t" style="top:780px"><span class="q">11.97</span><span class="o">65</span><span class="s">S</span><span class="u">4</span></div>
<div class="t" style="top:798px"><span class="q">11.97</span><span class="o">4</span><span class="s">S</span><span class="u">2</span></div>
<div class="t" style="top:816px"><span class="q">11.97</span><span class="o">26</span><span class="s">S</span><span class="u">3</span></div>
<div class="t" style="top:834px"><span class="q">11.97</span><span class="o">21</span><span class="s">S</span><span class="u">3</span></div>
<div class="t" style="top:852px"><span class="q">11.97</span><span class="o">12</span><span class="s">S</span><span class="u">1</span></div>
<div class="t" style="top:870px"><span class="q">11.97</span><span class="o">9</span><span class="s">S</span><span class="u">1</span></div>
<div class="t" style="top:888px"><span class="q">11.97</span><span class="o">1</span><span class="s">S</span><span class="u">1</span></div>
<div class="t" style="top:906px"><span class="q">11.97</span><span class="o">103</span><span class="s">S</span><span class="u">6</span></div>
<div class="t" style="top:924px"><span class="q">11.97</span><span class="o">1</span><span class="s">S</span><span class="u">1</span></div>
<div class="t" style="top:942px"><span class="k">14:57</span><span class="q">11.97</span><span class="o">24</span><span class="s">S</span><span class="u">1</span></div>
<div class="t" style="top:960px"><span class="k">15:00</span><span class="q">11.97</span><span class="o" style="color:#c010d8">735</span><span class="u">64</span></div>

</body></html>
